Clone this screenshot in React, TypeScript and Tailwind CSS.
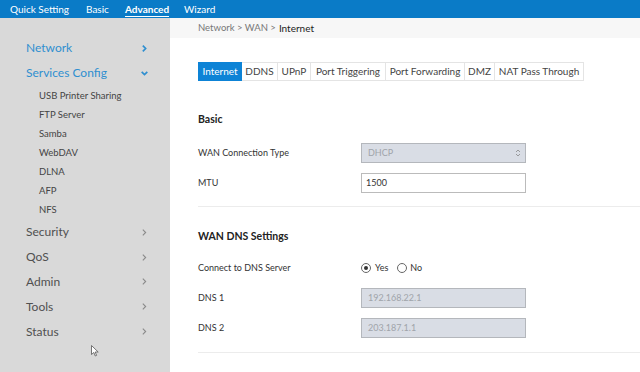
import React from 'react';

const mainFont = { fontFamily: 'Lato, "Noto Sans", sans-serif' };

const Chevron = ({ down = false, blue = false }: { down?: boolean; blue?: boolean }) => (
  <svg width="9" height="9" viewBox="0 0 8 8" className={blue ? 'text-[#2f8fd0]' : 'text-[#8a8a8a]'}>
    {down ? (
      <path d="M1.5 2.5 L4 5 L6.5 2.5" fill="none" stroke="currentColor" strokeWidth={blue ? 1.5 : 1} />
    ) : (
      <path d="M2.5 1.5 L5 4 L2.5 6.5" fill="none" stroke="currentColor" strokeWidth={blue ? 1.5 : 1} />
    )}
  </svg>
);

const subItems = ['USB Printer Sharing', 'FTP Server', 'Samba', 'WebDAV', 'DLNA', 'AFP', 'NFS'];
const lowerItems = ['Security', 'QoS', 'Admin', 'Tools', 'Status'];
const tabs = [
  { t: 'Internet', w: 'w-[44px]' },
  { t: 'DDNS', w: 'w-[36px]' },
  { t: 'UPnP', w: 'w-[33px]' },
  { t: 'Port Triggering', w: 'w-[75px]' },
  { t: 'Port Forwarding', w: 'w-[79px]' },
  { t: 'DMZ', w: 'w-[30px]' },
  { t: 'NAT Pass Through', w: 'w-[89px]' },
];

const Row = ({ label, children }: { label: string; children: React.ReactNode }) => (
  <div className="flex items-center h-[20px]">
    <div className="w-[163px] text-[9px] text-[#333]">{label}</div>
    {children}
  </div>
);

export default function App() {
  return (
    <div className="relative w-[640px] h-[372px] overflow-hidden flex flex-col bg-white" style={mainFont}>
      <div className="h-[18px] bg-[#0a7bc7] flex items-center text-white text-[10px] shrink-0 whitespace-nowrap pl-[10px]">
        <span className="w-[76px]">Quick Setting</span>
        <span className="w-[39px]">Basic</span>
        <span className="w-[59px]">
          <span className="font-bold relative">
            Advanced
            <span className="absolute left-0 right-0 bottom-[-2px] h-[1px] bg-white" />
          </span>
        </span>
        <span>Wizard</span>
      </div>
      <div className="flex flex-1">
        <div className="w-[170px] bg-[#d9d9d9] pt-[20px] shrink-0">
          <div className="flex items-center justify-between pl-[26px] pr-[21px] h-[20px] text-[12px] text-[#2f8fd0]">
            <span>Network</span>
            <Chevron blue />
          </div>
          <div className="flex items-center justify-between pl-[26px] pr-[21px] h-[20px] mt-[5px] text-[12px] text-[#2f8fd0]">
            <span>Services Config</span>
            <Chevron blue down />
          </div>
          <div className="flex flex-col pt-[4px]">
            {subItems.map((s) => (
              <div key={s} className="pl-[39px] h-[19px] flex items-center text-[9.5px] text-[#444]">
                {s}
              </div>
            ))}
          </div>
          <div className="flex flex-col">
            {lowerItems.map((s) => (
              <div key={s} className="flex items-center justify-between pl-[26px] pr-[21px] h-[24.8px] text-[12px] text-[#505050]">
                <span>{s}</span>
                <Chevron />
              </div>
            ))}
          </div>
        </div>
        <div className="flex-1 flex flex-col">
          <div className="h-[20px] bg-[#f7f7f7] flex items-center pl-[28px] text-[9.5px] text-[#777]">
            Network &gt; WAN &gt; <span className="text-[#222] ml-[3px] text-[10px]">Internet</span>
          </div>
          <div className="pl-[28px] pt-[24px]">
            <div className="flex h-[19px] text-[10px] text-[#444]">
              {tabs.map((t, i) => (
                <div
                  key={t.t}
                  className={
                    i === 0
                      ? `${t.w} flex items-center justify-center bg-[#0d83d6] text-white`
                      : `${t.w} flex items-center justify-center border border-l-0 border-[#e4e4e4] whitespace-nowrap`
                  }
                >
                  {t.t}
                </div>
              ))}
            </div>
            <div className="text-[10.5px] font-bold text-[#222] mt-[32px] h-[14px] flex items-center">Basic</div>
            <div className="mt-[16px] flex flex-col gap-[10px]">
              <Row label="WAN Connection Type">
                <div className="w-[165px] h-[20px] bg-[#d9dde5] border border-[#b4b7bc] flex items-center justify-between pl-[6px] pr-[4px] text-[9px] text-[#a0a4aa]">
                  <span>DHCP</span>
                  <svg width="6" height="10" viewBox="0 0 6 10">
                    <path d="M1 4 L3 2 L5 4 M1 6 L3 8 L5 6" fill="none" stroke="#888" strokeWidth="0.8" />
                  </svg>
                </div>
              </Row>
              <Row label="MTU">
                <div className="w-[165px] h-[20px] bg-white border border-[#bbb] flex items-center pl-[4px] text-[9px] text-[#333]">1500</div>
              </Row>
            </div>
          </div>
          <div className="ml-[28px] mt-[13px] h-[1px] bg-[#ececec]" />
          <div className="pl-[28px]">
            <div className="text-[10.5px] font-bold text-[#222] mt-[23px] h-[14px] flex items-center">WAN DNS Settings</div>
            <div className="mt-[14px] flex flex-col gap-[10px]">
              <Row label="Connect to DNS Server">
                <div className="flex items-center text-[9px] text-[#333]">
                  <span className="w-[10px] h-[10px] rounded-full border border-[#666] flex items-center justify-center">
                    <span className="w-[4px] h-[4px] rounded-full bg-[#333]" />
                  </span>
                  <span className="ml-[4px] mr-[9px]">Yes</span>
                  <span className="w-[10px] h-[10px] rounded-full border border-[#666]" />
                  <span className="ml-[3px]">No</span>
                </div>
              </Row>
              <Row label="DNS 1">
                <div className="w-[165px] h-[20px] bg-[#d9dde5] border border-[#b4b7bc] flex items-center pl-[6px] text-[9px] text-[#a0a4aa]">192.168.22.1</div>
              </Row>
              <Row label="DNS 2">
                <div className="w-[165px] h-[20px] bg-[#d9dde5] border border-[#b4b7bc] flex items-center pl-[6px] text-[9px] text-[#a0a4aa]">203.187.1.1</div>
              </Row>
            </div>
          </div>
          <div className="ml-[28px] mt-[14px] h-[1px] bg-[#ececec]" />
        </div>
      </div>
      {/* mouse pointer */}
      <svg className="absolute left-[91px] top-[345px]" width="8" height="12" viewBox="0 0 8 12">
        <path d="M0.5 0.5 L0.5 9.5 L2.8 7.5 L4.3 11 L5.6 10.4 L4.2 7 L7.2 7 Z" fill="#fff" stroke="#555" strokeWidth="0.8" />
      </svg>
    </div>
  );
}
